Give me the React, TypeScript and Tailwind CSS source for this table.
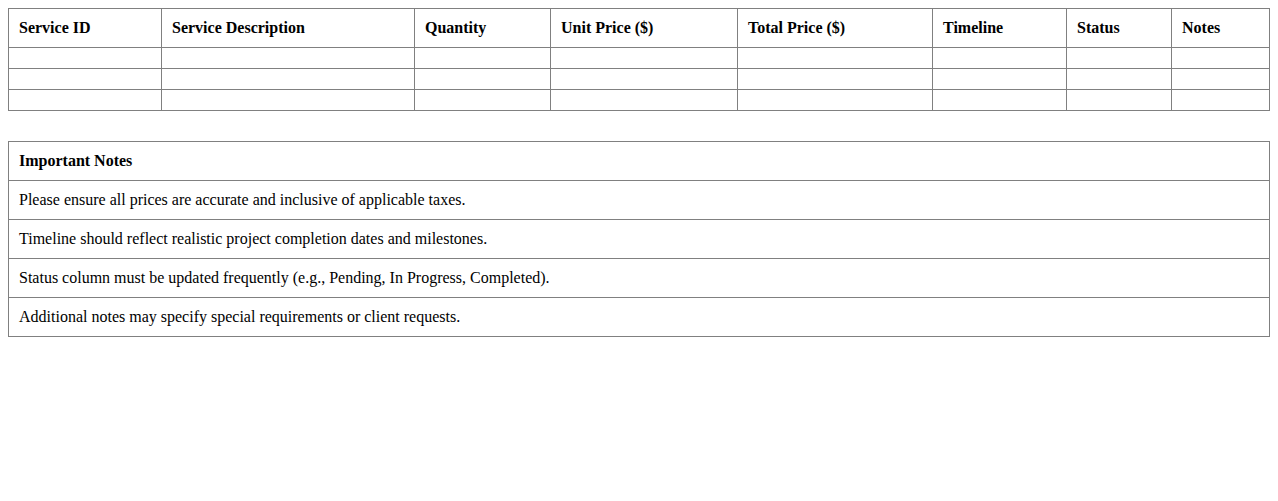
const columns = [
  { label: "Service ID", width: "w-[153px]" },
  { label: "Service Description", width: "w-[253px]" },
  { label: "Quantity", width: "w-[136px]" },
  { label: "Unit Price ($)", width: "w-[187px]" },
  { label: "Total Price ($)", width: "w-[195px]" },
  { label: "Timeline", width: "w-[134px]" },
  { label: "Status", width: "w-[105px]" },
  { label: "Notes", width: "w-[98px]" },
];

const notes = [
  "Please ensure all prices are accurate and inclusive of applicable taxes.",
  "Timeline should reflect realistic project completion dates and milestones.",
  "Status column must be updated frequently (e.g., Pending, In Progress, Completed).",
  "Additional notes may specify special requirements or client requests.",
];

const cell = "border border-[#808080] px-[10px] py-[10px] text-left align-middle";

export default function App() {
  return (
    <div className="min-h-screen bg-white p-2 text-[16px] leading-[18px] text-black font-['Liberation_Serif','Times_New_Roman',serif]">
      <table className="mb-[30px] w-full table-fixed border-collapse">
        <thead>
          <tr>
            {columns.map((c) => (
              <th key={c.label} className={`${cell} ${c.width} font-bold`}>
                {c.label}
              </th>
            ))}
          </tr>
        </thead>
        <tbody>
          {[0, 1, 2].map((r) => (
            <tr key={r}>
              {columns.map((c) => (
                <td key={c.label} className={`${cell} h-[21px] py-0`}></td>
              ))}
            </tr>
          ))}
        </tbody>
      </table>

      <table className="w-full border-collapse">
        <thead>
          <tr>
            <th className={`${cell} font-bold`}>Important Notes</th>
          </tr>
        </thead>
        <tbody>
          {notes.map((n) => (
            <tr key={n}>
              <td className={cell}>{n}</td>
            </tr>
          ))}
        </tbody>
      </table>
    </div>
  );
}
